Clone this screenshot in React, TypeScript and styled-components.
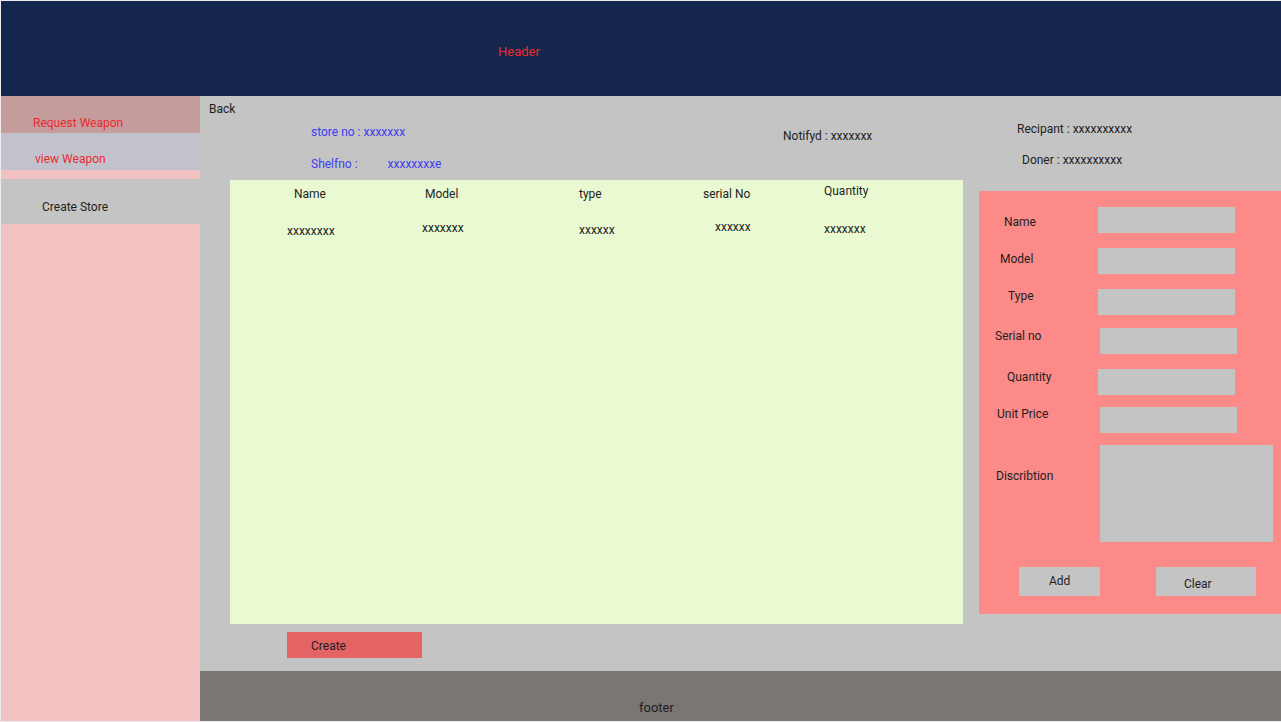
import React from "react";
import styled, { createGlobalStyle } from "styled-components";

const Global = createGlobalStyle`
  html, body { margin: 0; padding: 0; background: #ececec; }
  body { font-family: Roboto, "Noto Sans", Arial, sans-serif; font-size: 12px; color: #1e1e1e; }
  * { box-sizing: border-box; }
`;

const Page = styled.div`
  margin: 1px 0 0 1px;
  width: 1280px;
  height: 720px;
  display: grid;
  grid-template-columns: 199px 1fr;
  grid-template-rows: 95px 1fr 50px;
  overflow: hidden;
`;

const Header = styled.header`
  grid-column: 1 / 3;
  background: #14264b;
  color: #ec2a2e;
  font-size: 13px;
  display: flex;
  align-items: center;
  padding: 5px 0 0 497px;
`;

const Sidebar = styled.nav`
  grid-row: 2 / 4;
  background: #f2c2c2;
  display: flex;
  flex-direction: column;
`;

const NavItem = styled.div<{ $bg: string; $h: number; $pt: number; $pl: number; $mt?: number; $color: string }>`
  background: ${(p) => p.$bg};
  height: ${(p) => p.$h}px;
  padding: ${(p) => p.$pt}px 0 0 ${(p) => p.$pl}px;
  margin-top: ${(p) => p.$mt ?? 0}px;
  color: ${(p) => p.$color};
  line-height: 16px;
`;

const Main = styled.main`
  background: #c4c4c4;
  display: grid;
  grid-template-columns: 779px 1fr;
`;

const LeftCol = styled.div`
  display: flex;
  flex-direction: column;
`;

const Back = styled.div`
  margin: 5px 0 0 9px;
  line-height: 16px;
`;

const InfoRow = styled.div`
  display: grid;
  grid-template-columns: 111px 472px auto;
  height: 63px;
`;

const InfoStack = styled.div`
  grid-column: 2;
  display: flex;
  flex-direction: column;
  gap: 16px;
  padding-top: 7px;
  color: #3d3df2;
  line-height: 16px;
`;

const ShelfLine = styled.div`
  display: flex;
  gap: 30px;
`;

const Notify = styled.div`
  grid-column: 3;
  padding-top: 11px;
  line-height: 16px;
`;

const Table = styled.div`
  margin-left: 30px;
  width: 733px;
  height: 444px;
  background: #e9f9d2;
  padding: 6px 0 0 57px;
  display: flex;
  flex-direction: column;
  gap: 17px;
`;

const TRow = styled.div`
  display: grid;
  grid-template-columns: 135px 157px 124px 121px auto;
  align-items: start;
  height: 16px;
`;

const Cell = styled.div<{ $dx?: number; $dy?: number }>`
  margin-left: ${(p) => p.$dx ?? 0}px;
  margin-top: ${(p) => p.$dy ?? 0}px;
  line-height: 16px;
  white-space: nowrap;
`;

const CreateButton = styled.button`
  margin: 8px 0 0 87px;
  width: 135px;
  height: 26px;
  background: #e46464;
  border: none;
  font: inherit;
  color: #1e1e1e;
  text-align: left;
  padding: 2px 0 0 24px;
`;

const RightCol = styled.div`
  display: flex;
  flex-direction: column;
  padding-top: 25px;
`;

const SideInfo = styled.div<{ $ml: number; $mt?: number }>`
  margin: ${(p) => p.$mt ?? 0}px 0 0 ${(p) => p.$ml}px;
  line-height: 16px;
`;

const Form = styled.form`
  margin-top: 23px;
  height: 423px;
  background: #fb8a88;
  display: flex;
  flex-direction: column;
`;

const Field = styled.div<{ $mt: number; $pl: number }>`
  display: flex;
  align-items: flex-start;
  margin-top: ${(p) => p.$mt}px;
  padding-left: ${(p) => p.$pl}px;
`;

const Label = styled.label<{ $w: number; $dy: number }>`
  width: ${(p) => p.$w}px;
  margin-top: ${(p) => p.$dy}px;
  line-height: 16px;
  flex: none;
`;

const Input = styled.div<{ $w?: number; $h?: number }>`
  width: ${(p) => p.$w ?? 137}px;
  height: ${(p) => p.$h ?? 26}px;
  background: #c4c4c4;
  flex: none;
`;

const Buttons = styled.div`
  display: flex;
  margin-top: 25px;
  padding-left: 40px;
  gap: 56px;
`;

const FormButton = styled.button<{ $w: number; $pl: number; $pt: number; $pb: number }>`
  width: ${(p) => p.$w}px;
  height: 29px;
  background: #c4c4c4;
  border: none;
  font: inherit;
  color: #1e1e1e;
  text-align: left;
  padding: ${(p) => p.$pt}px 0 ${(p) => p.$pb}px ${(p) => p.$pl}px;
  line-height: 14px;
  display: block;
`;

const Footer = styled.footer`
  background: #7a7674;
  padding: 29px 0 0 439px;
  line-height: 16px;
  font-size: 13px;
`;

const fields = [
  { label: "Name", mt: 16, pl: 25, w: 94, dy: 7 },
  { label: "Model", mt: 15, pl: 21, w: 98, dy: 3 },
  { label: "Type", mt: 15, pl: 29, w: 90, dy: -1 },
  { label: "Serial no", mt: 13, pl: 16, w: 105, dy: 0 },
  { label: "Quantity", mt: 15, pl: 28, w: 91, dy: 0 },
  { label: "Unit Price", mt: 12, pl: 18, w: 103, dy: -1 },
];

export default function App() {
  return (
    <>
      <Global />
      <Page>
        <Header>Header</Header>
        <Sidebar>
          <NavItem $bg="#c49c9c" $h={37} $pt={19} $pl={32} $color="#ec2a2e">Request Weapon</NavItem>
          <NavItem $bg="#c2c2cc" $h={37} $pt={18} $pl={34} $color="#ec2a2e">view Weapon</NavItem>
          <NavItem $bg="#c4c4c4" $h={45} $pt={20} $pl={41} $mt={9} $color="#1e1e1e">Create Store</NavItem>
        </Sidebar>
        <Main>
          <LeftCol>
            <Back>Back</Back>
            <InfoRow>
              <InfoStack>
                <div>store no : xxxxxxx</div>
                <ShelfLine>
                  <span>Shelfno :</span>
                  <span>xxxxxxxxe</span>
                </ShelfLine>
              </InfoStack>
              <Notify>Notifyd : xxxxxxx</Notify>
            </InfoRow>
            <Table>
              <TRow>
                <Cell $dx={7}>Name</Cell>
                <Cell $dx={3}>Model</Cell>
                <Cell>type</Cell>
                <Cell>serial No</Cell>
                <Cell $dy={-3}>Quantity</Cell>
              </TRow>
              <TRow>
                <Cell $dy={4}>xxxxxxxx</Cell>
                <Cell $dy={1}>xxxxxxx</Cell>
                <Cell $dy={3}>xxxxxx</Cell>
                <Cell $dx={12}>xxxxxx</Cell>
                <Cell $dy={2}>xxxxxxx</Cell>
              </TRow>
            </Table>
            <CreateButton type="button">Create</CreateButton>
          </LeftCol>
          <RightCol>
            <SideInfo $ml={38}>Recipant : xxxxxxxxxx</SideInfo>
            <SideInfo $ml={43} $mt={15}>Doner : xxxxxxxxxx</SideInfo>
            <Form>
              {fields.map((f) => (
                <Field key={f.label} $mt={f.mt} $pl={f.pl}>
                  <Label $w={f.w} $dy={f.dy}>{f.label}</Label>
                  <Input />
                </Field>
              ))}
              <Field $mt={12} $pl={17}>
                <Label $w={104} $dy={23}>Discribtion</Label>
                <Input $w={173} $h={97} />
              </Field>
              <Buttons>
                <FormButton type="button" $w={81} $pl={30} $pt={0} $pb={2}>Add</FormButton>
                <FormButton type="button" $w={100} $pl={28} $pt={4} $pb={0}>Clear</FormButton>
              </Buttons>
            </Form>
          </RightCol>
        </Main>
        <Footer>footer</Footer>
      </Page>
    </>
  );
}
